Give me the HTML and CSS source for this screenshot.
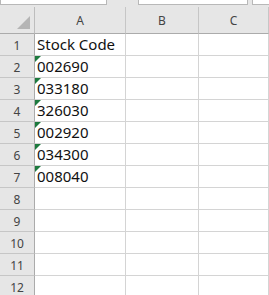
FILE: index.html
```html
<!DOCTYPE html>
<html lang="en">
<head>
    <meta charset="UTF-8">
    <title>Sheet</title>
    <link rel="stylesheet" href="styles.css">
</head>
<body>
    <!-- Barra de fórmulas (recortada) -->
    <div class="formula-bar">
        <div class="name-box"></div>
        <div class="formula-box"></div>
        <div class="formula-end"></div>
    </div>

    <div class="sheet">
        <div class="corner"><span class="select-all"></span></div>
        <div class="col-head">A</div>
        <div class="col-head">B</div>
        <div class="col-head">C</div>

        <div class="row-head">1</div>
        <div class="cell">Stock Code</div>
        <div class="cell"></div>
        <div class="cell"></div>

        <div class="row-head">2</div>
        <div class="cell flagged">002690</div>
        <div class="cell"></div>
        <div class="cell"></div>

        <div class="row-head">3</div>
        <div class="cell flagged">033180</div>
        <div class="cell"></div>
        <div class="cell"></div>

        <div class="row-head">4</div>
        <div class="cell flagged">326030</div>
        <div class="cell"></div>
        <div class="cell"></div>

        <div class="row-head">5</div>
        <div class="cell flagged">002920</div>
        <div class="cell"></div>
        <div class="cell"></div>

        <div class="row-head">6</div>
        <div class="cell flagged">034300</div>
        <div class="cell"></div>
        <div class="cell"></div>

        <div class="row-head">7</div>
        <div class="cell flagged">008040</div>
        <div class="cell"></div>
        <div class="cell"></div>

        <div class="row-head">8</div>
        <div class="cell"></div>
        <div class="cell"></div>
        <div class="cell"></div>

        <div class="row-head">9</div>
        <div class="cell"></div>
        <div class="cell"></div>
        <div class="cell"></div>

        <div class="row-head">10</div>
        <div class="cell"></div>
        <div class="cell"></div>
        <div class="cell"></div>

        <div class="row-head">11</div>
        <div class="cell"></div>
        <div class="cell"></div>
        <div class="cell"></div>

        <div class="row-head">12</div>
        <div class="cell"></div>
        <div class="cell"></div>
        <div class="cell"></div>
    </div>
</body>
</html>
```

FILE: styles.css
```css
/* General */
body {
    margin: 0;
    padding: 0;
    background: #fff;
    font-family: "Noto Sans", sans-serif;
    overflow: hidden;
}

/* Barra de fórmulas */
.formula-bar {
    display: flex;
    height: 7px;
    background: #e6e6e6;
}
.name-box {
    width: 107px;
    height: 5px;
    background: #fff;
    border: 1px solid #b8b8b8;
    border-top: none;
    box-sizing: border-box;
}
.formula-box {
    width: 110px;
    height: 5px;
    margin-left: 31px;
    background: #fff;
    border: 1px solid #b8b8b8;
    border-top: none;
    box-sizing: border-box;
}
.formula-end {
    flex: 1;
    height: 5px;
    margin-left: 4px;
    background: #fff;
    border: 1px solid #b8b8b8;
    border-top: none;
    border-right: none;
    box-sizing: border-box;
}

/* Hoja */
.sheet {
    display: grid;
    grid-template-columns: 35px 91px 73px 70px;
    grid-template-rows: 27px;
    grid-auto-rows: 22px;
}
.sheet > div {
    box-sizing: border-box;
}

.corner {
    position: relative;
    background: #e6e6e6;
    border-right: 1px solid #bdbdbd;
    border-bottom: 1px solid #ababab;
}
.select-all {
    position: absolute;
    right: 4px;
    bottom: 4px;
    width: 0;
    height: 0;
    border-left: 13px solid transparent;
    border-bottom: 13px solid #b5b5b5;
}

.col-head {
    display: flex;
    align-items: center;
    justify-content: center;
    padding-top: 1px;
    background: #e6e6e6;
    border-right: 1px solid #c6c6c6;
    border-bottom: 1px solid #ababab;
    font-size: 12px;
    color: #444;
}

.row-head {
    display: flex;
    align-items: center;
    justify-content: center;
    padding-top: 1px;
    background: #e6e6e6;
    border-right: 1px solid #ababab;
    border-bottom: 1px solid #c6c6c6;
    font-size: 12px;
    color: #444;
}

.cell {
    position: relative;
    display: flex;
    align-items: flex-end;
    padding: 0 0 2px 2px;
    border-right: 1px solid #d4d4d4;
    border-bottom: 1px solid #d4d4d4;
    font-size: 15px;
    line-height: 17px;
    color: #111;
    white-space: nowrap;
}

/* Triángulo verde de número como texto */
.flagged::before {
    content: "";
    position: absolute;
    top: 0;
    left: 0;
    border-top: 6px solid #1d7a3e;
    border-right: 6px solid transparent;
}
```
